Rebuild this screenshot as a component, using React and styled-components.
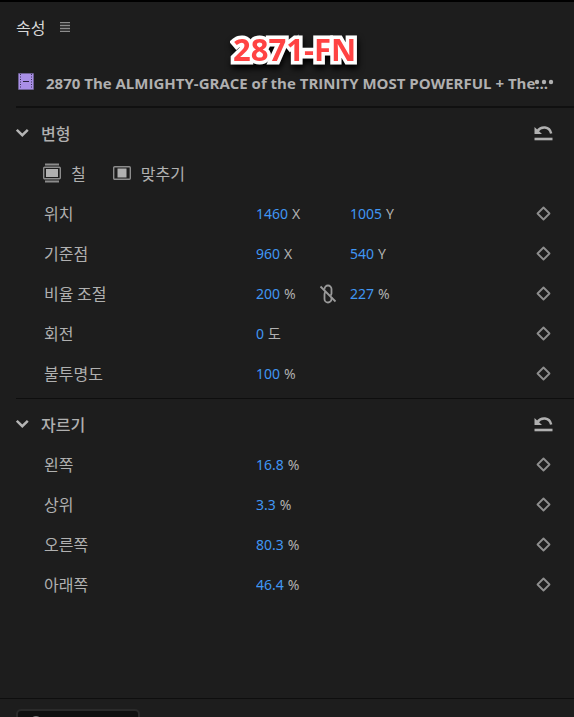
import { useId, useState } from 'react';
import styled, { createGlobalStyle } from 'styled-components';

const transformRows = [
  { label: '위치', fields: [['1460', 'X'], ['1005', 'Y']] },
  { label: '기준점', fields: [['960', 'X'], ['540', 'Y']] },
  { label: '비율 조절', fields: [['200', '%'], ['227', '%']], linked: true },
  { label: '회전', fields: [['0', '도']] },
  { label: '불투명도', fields: [['100', '%']] },
];

const cropRows = [
  { label: '왼쪽', fields: [['16.8', '%']] },
  { label: '상위', fields: [['3.3', '%']] },
  { label: '오른쪽', fields: [['80.3', '%']] },
  { label: '아래쪽', fields: [['46.4', '%']] },
];

const MenuIcon = () => (
  <svg width="10" height="10" viewBox="0 0 10 10" aria-hidden="true">
    <path d="M0 .5h10M0 3.5h10M0 6.5h10M0 9.5h10" stroke="#8c8c8c" strokeWidth="1.3" />
  </svg>
);

const ClipIcon = () => (
  <svg width="16" height="20" viewBox="0 0 16 20" aria-hidden="true">
    <rect width="16" height="17" rx="1" fill="#6f6195" />
    <rect x="1" y="1" width="14" height="15" fill="#a98fe6" />
    <path d="M2.5 1v15M13.5 1v15" stroke="#3b3156" strokeDasharray="1 1.5" />
    <path d="M5 8.5h6" stroke="#2c2440" />
  </svg>
);

const ChevronIcon = () => (
  <svg width="14" height="10" viewBox="0 0 14 10" aria-hidden="true">
    <path d="M.8 1.8l5.500 5.400 5.500-5.400" fill="none" stroke="#b4b4b4" strokeWidth="2.500" />
  </svg>
);

const ResetIcon = () => (
  <svg width="19" height="16" viewBox="0 0 19 16" aria-hidden="true">
    <path d="M.5 2v7h7.500z" fill="#b0b0b0" />
    <path d="M3.500 6C7 1 15.500.8 17.200 8.600" fill="none" stroke="#b0b0b0" strokeWidth="2.500" />
    <path d="M.5 14h18" stroke="#b0b0b0" strokeWidth="2.600" />
  </svg>
);

const FillIcon = () => (
  <svg width="18" height="20" viewBox="0 0 18 20" aria-hidden="true">
    <path d="M2 1.500h14M2 18.500h14" stroke="#8c8c8c" strokeWidth="2" />
    <rect x=".7" y="4.200" width="16.600" height="11.600" rx="1" fill="none" stroke="#8c8c8c" strokeWidth="1.400" />
    <rect x="3" y="6" width="12" height="8" fill="#b0b0b0" />
  </svg>
);

const FitIcon = () => (
  <svg width="18" height="14" viewBox="0 0 18 14" aria-hidden="true">
    <rect x=".7" y=".7" width="16.600" height="12.600" rx="1" fill="none" stroke="#8c8c8c" strokeWidth="1.400" />
    <rect x="4.500" y="2.500" width="9" height="9" fill="#b0b0b0" />
  </svg>
);

const UnlinkIcon = () => (
  <svg width="18" height="20" viewBox="0 0 18 20" aria-hidden="true">
    <g fill="none" stroke="#9a9a9a" strokeWidth="1.800">
      <path d="M5.500 5.500V5a3.500 3.500 0 0 1 7 0v4.500a3 3 0 0 1-1 2" />
      <path d="M12.500 13.500V15a3.500 3.500 0 0 1-7 0v-4.500A3 3 0 0 1 6.500 8" />
      <path d="M1.500 2.500l15 15" />
    </g>
  </svg>
);

const DiamondIcon = () => (
  <svg width="15" height="15" viewBox="0 0 15 15" aria-hidden="true">
    <path d="M7.500 1.500l6 6-6 6-6-6z" fill="none" stroke="#8e8e8e" strokeWidth="1.800" strokeLinejoin="round" />
  </svg>
);

const MoreIcon = () => (
  <svg width="20" height="6" viewBox="0 0 20 6" fill="#b0b0b0" aria-hidden="true">
    <circle cx="3" cy="3" r="2.200" />
    <circle cx="10" cy="3" r="2.200" />
    <circle cx="17" cy="3" r="2.200" />
  </svg>
);

const PropertyRow = ({ label, fields, linked }) => {
  const id = useId();
  const [values, setValues] = useState(fields.map(([value]) => value));

  const handleChange = (index, next) => {
    setValues(values.map((value, i) => (i === index ? next : value)));
  };

  return (
    <Row>
      <RowLabel htmlFor={`${id}-0`}>{label}</RowLabel>
      {fields.map(([, unit], index) => (
        <Field key={`${unit}-${index + 1}`}>
          <ValueInput
            id={`${id}-${index}`}
            aria-label={index > 0 ? `${label} ${unit}` : undefined}
            size={values[index].length || 1}
            value={values[index]}
            onChange={(e) => handleChange(index, e.target.value)}
          />
          <Unit>{unit}</Unit>
          {linked && index === 0 && (
            <LinkButton type="button" aria-label={label}>
              <UnlinkIcon />
            </LinkButton>
          )}
        </Field>
      ))}
      <KeyframeButton type="button" aria-label={label}>
        <DiamondIcon />
      </KeyframeButton>
    </Row>
  );
};

const Section = ({ title, rows, children }) => {
  const [open, setOpen] = useState(true);

  return (
    <SectionBox>
      <SectionHeader>
        <SectionToggle type="button" aria-expanded={open} onClick={() => setOpen(!open)}>
          <ChevronIcon />
          <SectionTitle>{title}</SectionTitle>
        </SectionToggle>
        <IconButton type="button" aria-label={title}>
          <ResetIcon />
        </IconButton>
      </SectionHeader>
      {open && children}
      {open && rows.map((row) => <PropertyRow key={row.label} {...row} />)}
    </SectionBox>
  );
};

const App = () => (
  <>
    <GlobalStyle />
    <Panel>
      <PanelHeader>
        <PanelTitle>속성</PanelTitle>
        <IconButton type="button" aria-label="속성">
          <MenuIcon />
        </IconButton>
      </PanelHeader>
      <ClipHeader>
        <ClipIcon />
        <ClipName>2870 The ALMIGHTY-GRACE of the TRINITY MOST POWERFUL + The...</ClipName>
        <MoreButton type="button" aria-label="...">
          <MoreIcon />
        </MoreButton>
        <Stamp>2871-FN</Stamp>
      </ClipHeader>
      <Sections>
        <Section title="변형" rows={transformRows}>
          <ActionRow>
            <ActionButton type="button">
              <FillIcon />
              칠
            </ActionButton>
            <ActionButton type="button">
              <FitIcon />
              맞추기
            </ActionButton>
          </ActionRow>
        </Section>
        <Section title="자르기" rows={cropRows} />
      </Sections>
      <Footer>
        <FooterButton type="button" aria-label="속성">
          <FooterDot />
        </FooterButton>
      </Footer>
    </Panel>
  </>
);

export default App;

const GlobalStyle = createGlobalStyle`
  * {
    box-sizing: border-box;
  }
  body {
    margin: 0;
    background: #1d1d1d;
    color: #b0b0b0;
    font-family: 'Noto Sans', 'Noto Sans CJK KR', sans-serif;
    font-size: 14px;
    line-height: 20px;
  }
  svg {
    display: block;
    flex: none;
  }
  button {
    padding: 0;
    border: 0;
    background: none;
    color: inherit;
    font: inherit;
  }
`;

const Panel = styled.main`
  display: flex;
  flex-direction: column;
  height: 100vh;
  overflow: hidden;
  border-top: 2px solid #000;
`;

const PanelHeader = styled.header`
  display: flex;
  align-items: center;
  gap: 15px;
  height: 50px;
  padding: 0 16px;
`;

const PanelTitle = styled.h1`
  margin: 0;
  color: #d8d8d8;
  font-family: 'Noto Sans CJK KR', sans-serif;
  font-size: 16px;
  font-weight: 400;
`;

const IconButton = styled.button`
  display: flex;
`;

const ClipHeader = styled.div`
  position: relative;
  display: flex;
  align-items: center;
  gap: 12px;
  height: 56px;
  margin-left: 16px;
  padding: 8px 2px 0;
  border-bottom: 2px solid #101010;
`;

const ClipName = styled.h2`
  margin: 0;
  font-family: 'Open Sans', sans-serif;
  font-size: 15px;
  font-weight: 700;
  white-space: nowrap;
`;

const MoreButton = styled.button`
  position: absolute;
  top: 27px;
  right: 20px;
`;

const Stamp = styled.strong`
  position: absolute;
  top: -21px;
  left: 217px;
  color: #ff4343;
  font-family: 'Open Sans', sans-serif;
  font-size: 31px;
  font-weight: 700;
  line-height: 36px;
  white-space: nowrap;
  -webkit-text-stroke: 7px #fff;
  paint-order: stroke fill;
  stroke-linejoin: round;
  filter: drop-shadow(1px 4px 3px #000);
`;

const Sections = styled.div`
  flex: 1;
  min-height: 0;
`;

const SectionBox = styled.section`
  margin-left: 16px;
  padding: 5px 20px 5px 0;

  & + & {
    border-top: 1px solid #0e0e0e;
  }
`;

const SectionHeader = styled.div`
  display: flex;
  align-items: center;
  justify-content: space-between;
  height: 40px;
  padding-right: 1px;
`;

const SectionToggle = styled.button`
  display: flex;
  align-items: center;
  gap: 11px;
`;

const SectionTitle = styled.span`
  font-family: 'Noto Sans CJK KR', sans-serif;
  font-size: 16px;
  font-weight: 500;
`;

const ActionRow = styled.div`
  display: flex;
  align-items: center;
  gap: 27px;
  height: 40px;
  padding-left: 27px;
`;

const ActionButton = styled.button`
  display: flex;
  align-items: center;
  gap: 10px;
  font-family: 'Noto Sans CJK KR', sans-serif;
  font-size: 16px;
`;

const Row = styled.div`
  display: grid;
  grid-template-columns: 212px 94px 1fr auto;
  align-items: center;
  height: 40px;
  padding-left: 28px;
`;

const RowLabel = styled.label`
  font-family: 'Noto Sans CJK KR', sans-serif;
  font-size: 16px;
`;

const Field = styled.div`
  display: flex;
  align-items: center;
  gap: 4px;
  padding-top: 2px;
`;

const ValueInput = styled.input`
  field-sizing: content;
  height: 20px;
  padding: 0;
  border: 0;
  background: none;
  color: #4096f3;
  font: inherit;
  outline: none;
`;

const Unit = styled.span`
  color: #b0b0b0;
`;

const LinkButton = styled.button`
  margin: 0 13px 0 auto;
`;

const KeyframeButton = styled.button`
  grid-column: 4;
  padding-right: 3px;
`;

const Footer = styled.footer`
  flex: none;
  height: 19px;
  padding: 10px 16px 0;
  overflow: hidden;
  border-top: 1px solid #0e0e0e;
`;

const FooterButton = styled.button`
  display: flex;
  width: 124px;
  height: 28px;
  padding: 5px 12px;
  border: 2px solid #2a2a2a;
  border-radius: 5px;
  background: #101010;
`;

const FooterDot = styled.span`
  width: 12px;
  height: 12px;
  border: 2px solid #777;
  border-radius: 50%;
`;
